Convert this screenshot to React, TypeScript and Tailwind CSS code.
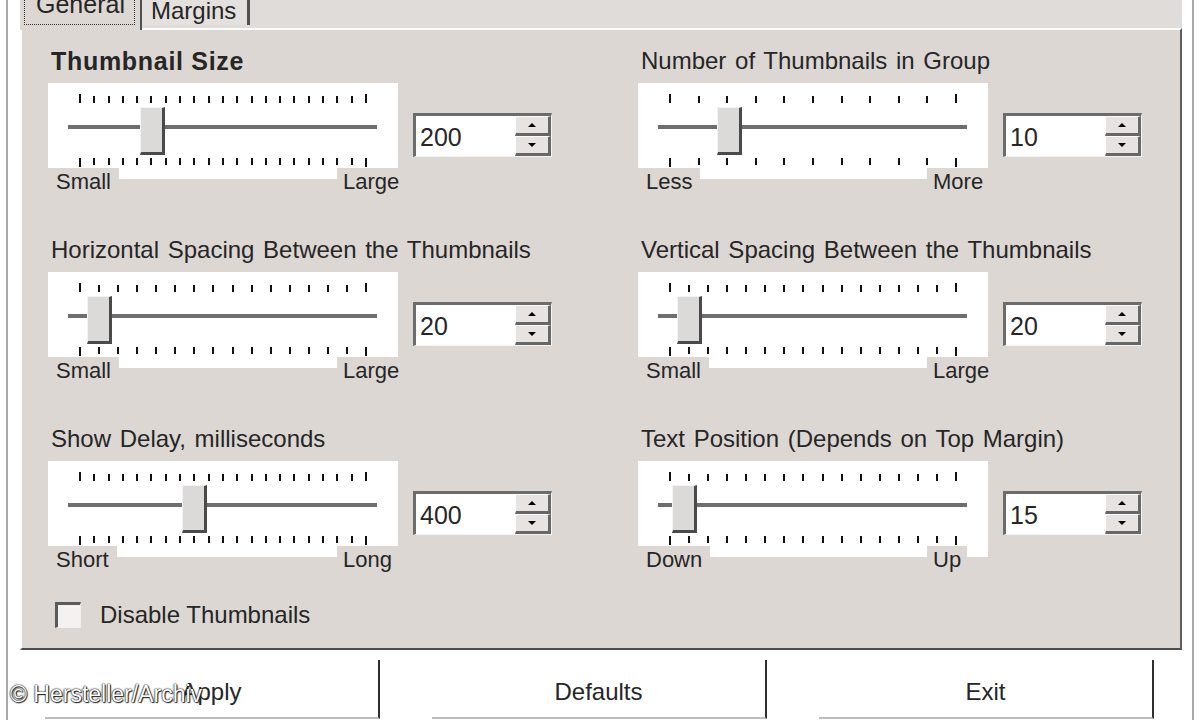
import React from 'react';

type SliderSpec = {
  title: string;
  bold?: boolean;
  ticks: number;
  thumb: number;
  min: string;
  max: string;
  value: string;
};

const rows: SliderSpec[] = [
  { title: 'Thumbnail Size', bold: true, ticks: 21, thumb: 92, min: 'Small', max: 'Large', value: '200' },
  { title: 'Number of Thumbnails in Group', ticks: 11, thumb: 79, min: 'Less', max: 'More', value: '10' },
  { title: 'Horizontal Spacing Between the Thumbnails', ticks: 16, thumb: 39, min: 'Small', max: 'Large', value: '20' },
  { title: 'Vertical Spacing Between the Thumbnails', ticks: 16, thumb: 39, min: 'Small', max: 'Large', value: '20' },
  { title: 'Show Delay, milliseconds', ticks: 21, thumb: 134, min: 'Short', max: 'Long', value: '400' },
  { title: 'Text Position (Depends on Top Margin)', ticks: 16, thumb: 34, min: 'Down', max: 'Up', value: '15' },
];

const Ticks: React.FC<{ count: number; top?: boolean }> = ({ count, top }) => (
  <div className={`mx-[31px] flex h-[9px] justify-between ${top ? 'mt-[11px] items-end' : 'mt-[29px] items-start'}`}>
    {Array.from({ length: count }).map((_, i) => (
      <div
        key={i}
        className={`w-[2px] bg-[#111] ${i === 0 || i === count - 1 ? 'h-[9px]' : 'h-[7px]'}`}
      />
    ))}
  </div>
);

const Spin: React.FC<{ value: string }> = ({ value }) => (
  <div className="ml-[15px] mt-[30px] flex h-[44px] w-[139px] border-t-[3px] border-l-[3px] border-r border-b border-t-[#6c6c6c] border-l-[#6c6c6c] border-r-[#f4f4f4] border-b-[#f4f4f4]">
    <div className="flex-1 bg-white pl-[4px] pt-[2px] text-[25px] leading-[38px]">{value}</div>
    <div className="flex w-[36px] flex-col bg-white">
      <div className="flex flex-1 items-center justify-center border-t border-l border-t-white border-l-white border-r-[3px] border-b-[3px] border-r-[#676767] border-b-[#676767] bg-[#e6e3e0]">
        <div className="h-0 w-0 border-x-[4px] border-b-[4px] border-x-transparent border-b-black" />
      </div>
      <div className="flex flex-1 items-center justify-center border-t border-l border-t-white border-l-white border-r-[3px] border-b-[3px] border-r-[#676767] border-b-[#676767] bg-[#e6e3e0]">
        <div className="h-0 w-0 border-x-[4px] border-t-[4px] border-x-transparent border-t-black" />
      </div>
    </div>
  </div>
);

const SliderCell: React.FC<{ spec: SliderSpec }> = ({ spec }) => (
  <div>
    <div
      className={`h-[28px] pl-[3px] leading-[28px] whitespace-nowrap ${spec.bold ? 'text-[25px] font-bold tracking-[0.7px]' : 'text-[24px] [word-spacing:2px]'}`}
    >
      {spec.title}
    </div>
    <div className="mt-[8px] flex items-start">
      <div className="w-[350px]">
        <div className="relative flex h-[96px] flex-col bg-white">
          <Ticks count={spec.ticks} top />
          <div className="ml-[20px] mt-[22px] h-[4px] w-[309px] bg-[#6e6e6e]" />
          <Ticks count={spec.ticks} />
          <div
            className="absolute top-[24px] h-[48px] w-[25px] border-t border-l border-t-[#f4f4f4] border-l-[#f4f4f4] border-r-[3px] border-b-[3px] border-r-[#4a4a4a] border-b-[#4a4a4a] bg-[#dcdad8]"
            style={{ left: spec.thumb }}
          />
        </div>
        <div className="relative -mt-[11px] grid h-[28px] grid-cols-[289px_auto] text-[22px] leading-[28px]">
          <span className="justify-self-start bg-[#dcd7d3] px-[8px]">{spec.min}</span>
          <span className="justify-self-start bg-[#dcd7d3] px-[6px]">{spec.max}</span>
        </div>
      </div>
      <Spin value={spec.value} />
    </div>
  </div>
);

export default function App() {
  return (
    <div className="relative h-[720px] w-[1200px] overflow-hidden bg-white px-[6px] font-['Liberation_Sans',Arial,sans-serif] text-[#262626]">
      <div className="h-full border-x-2 border-[#a9a9a9] pl-[12px] pr-[10px]">
        {/* tab strip */}
        <div className="flex h-[28px] items-start bg-[#e0dcd9]">
          <div className="relative z-10 h-[30px] w-[122px] border-r-2 border-r-[#505050] bg-[#dcd7d3] pl-[4px]">
            <div className="-mt-[11px] h-[36px] w-[111px] border border-dotted border-[#333] pl-[11px] text-[25px] leading-[28px]">
              General
            </div>
          </div>
          <div className="h-[25px] w-[108px] border-r-[3px] border-r-[#505050] bg-[#e4e0dd] pl-[9px] text-[24px] leading-[22px]">
            Margins
          </div>
        </div>

        {/* tab page */}
        <div className="h-[622px] border-t-2 border-l-2 border-r-2 border-b-2 border-t-white border-l-white border-r-[#5d5d5d] border-b-[#4d4d4d] bg-[#dcd7d3] pl-[26px] pt-[17px]">
          <div className="grid grid-cols-[504px_504px] gap-x-[86px] gap-y-[40px]">
            {rows.map((r) => (
              <SliderCell key={r.title} spec={r} />
            ))}
          </div>
          <div className="ml-[7px] mt-[27px] flex h-[28px] items-center gap-[19px]">
            <div className="h-[26px] w-[26px] border-t-[3px] border-l-[3px] border-r border-b border-t-[#5a5a5a] border-l-[#5a5a5a] border-r-[#f0f0f0] border-b-[#f0f0f0] bg-[#f3f2f1]" />
            <span className="text-[24px] leading-[28px]">Disable Thumbnails</span>
          </div>
        </div>

        {/* buttons */}
        <div className="ml-[25px] mt-[10px] flex gap-[52px]">
          {['Apply', 'Defaults', 'Exit'].map((b) => (
            <div
              key={b}
              className="flex h-[59px] w-[335px] items-center justify-center border-r-2 border-b-2 border-r-[#2e2e2e] border-b-[#bdbdbd] bg-white pt-[6px] text-[24px]"
            >
              {b}
            </div>
          ))}
        </div>
      </div>

      <div className="absolute left-[10px] top-[680px] text-[23px] leading-[28px] text-white [text-shadow:0_0_2px_#000,0_0_1px_#000,1px_1px_1px_#333]">
        © Hersteller/Archiv
      </div>
    </div>
  );
}
